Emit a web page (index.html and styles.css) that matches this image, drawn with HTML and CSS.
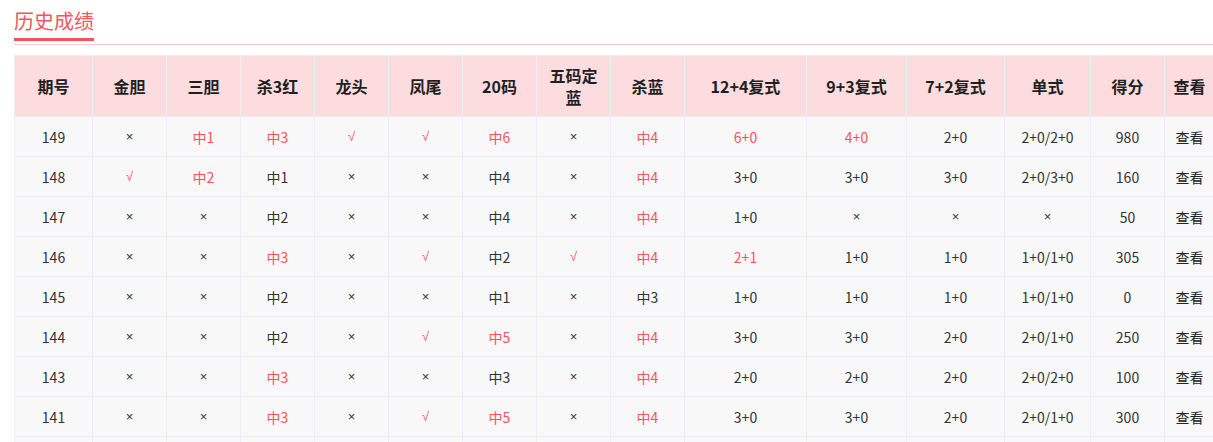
FILE: index.html
```html
<!DOCTYPE html>
<html lang="zh-CN">
<head>
<meta charset="utf-8">
<title>历史成绩</title>
<link rel="stylesheet" href="styles.css">
</head>
<body>
<div class="page">
  <div class="head"><span class="title">历史成绩</span></div>
  <table class="grid">
    <colgroup>
      <col class="c78"><col class="c74"><col class="c74"><col class="c74"><col class="c74"><col class="c74"><col class="c74"><col class="c74"><col class="c74"><col class="c122"><col class="c100"><col class="c98"><col class="c86"><col class="c74"><col class="c50">
    </colgroup>
    <thead>
      <tr><th>期号</th><th>金胆</th><th>三胆</th><th>杀3红</th><th>龙头</th><th>凤尾</th><th>20码</th><th>五码定<br>蓝</th><th>杀蓝</th><th>12+4复式</th><th>9+3复式</th><th>7+2复式</th><th>单式</th><th>得分</th><th>查看</th></tr>
    </thead>
    <tbody>
      <tr><td>149</td><td class="s">×</td><td class="r">中1</td><td class="r">中3</td><td class="r s">√</td><td class="r s">√</td><td class="r">中6</td><td class="s">×</td><td class="r">中4</td><td class="r">6+0</td><td class="r">4+0</td><td>2+0</td><td>2+0/2+0</td><td>980</td><td class="v">查看</td></tr>
      <tr><td>148</td><td class="r s">√</td><td class="r">中2</td><td>中1</td><td class="s">×</td><td class="s">×</td><td>中4</td><td class="s">×</td><td class="r">中4</td><td>3+0</td><td>3+0</td><td>3+0</td><td>2+0/3+0</td><td>160</td><td class="v">查看</td></tr>
      <tr><td>147</td><td class="s">×</td><td class="s">×</td><td>中2</td><td class="s">×</td><td class="s">×</td><td>中4</td><td class="s">×</td><td class="r">中4</td><td>1+0</td><td class="s">×</td><td class="s">×</td><td class="s">×</td><td>50</td><td class="v">查看</td></tr>
      <tr><td>146</td><td class="s">×</td><td class="s">×</td><td class="r">中3</td><td class="s">×</td><td class="r s">√</td><td>中2</td><td class="r s">√</td><td class="r">中4</td><td class="r">2+1</td><td>1+0</td><td>1+0</td><td>1+0/1+0</td><td>305</td><td class="v">查看</td></tr>
      <tr><td>145</td><td class="s">×</td><td class="s">×</td><td>中2</td><td class="s">×</td><td class="s">×</td><td>中1</td><td class="s">×</td><td>中3</td><td>1+0</td><td>1+0</td><td>1+0</td><td>1+0/1+0</td><td>0</td><td class="v">查看</td></tr>
      <tr><td>144</td><td class="s">×</td><td class="s">×</td><td>中2</td><td class="s">×</td><td class="r s">√</td><td class="r">中5</td><td class="s">×</td><td class="r">中4</td><td>3+0</td><td>3+0</td><td>2+0</td><td>2+0/1+0</td><td>250</td><td class="v">查看</td></tr>
      <tr><td>143</td><td class="s">×</td><td class="s">×</td><td class="r">中3</td><td class="s">×</td><td class="s">×</td><td>中3</td><td class="s">×</td><td class="r">中4</td><td>2+0</td><td>2+0</td><td>2+0</td><td>2+0/2+0</td><td>100</td><td class="v">查看</td></tr>
      <tr><td>141</td><td class="s">×</td><td class="s">×</td><td class="r">中3</td><td class="s">×</td><td class="r s">√</td><td class="r">中5</td><td class="s">×</td><td class="r">中4</td><td>3+0</td><td>3+0</td><td>2+0</td><td>2+0/1+0</td><td>300</td><td class="v">查看</td></tr>
      <tr class="more"><td></td><td></td><td></td><td></td><td></td><td></td><td></td><td></td><td></td><td></td><td></td><td></td><td></td><td></td><td></td></tr>
    </tbody>
  </table>
</div>
</body>
</html>
```

FILE: styles.css
```css
html, body {
  margin: 0;
  padding: 0;
  background: #fff;
  overflow: hidden;
}
body {
  font-family: "Noto Sans CJK SC", "Noto Sans", sans-serif;
  color: #333;
}
.page {
  padding: 7px 0 0 14px;
  width: 1200px;
}
.head {
  border-bottom: 1px solid #fcc8cb;
  height: 37px;
  width: 1199px;
}
.title {
  display: inline-block;
  font-size: 20px;
  line-height: 28px;
  height: 31px;
  width: 80px;
  color: #f5535a;
  border-bottom: 3px solid #f5535a;
}
.grid {
  margin-top: 10px;
  table-layout: fixed;
  width: 1200px;
  border-collapse: collapse;
  font-size: 14px;
}
.c78 { width: 78px; }
.c74 { width: 74px; }
.c122 { width: 122px; }
.c100 { width: 100px; }
.c98 { width: 98px; }
.c86 { width: 86px; }
.c50 { width: 50px; }
.grid th {
  background: #fddcdf;
  border: 1px solid #ebeef5;
  height: 60px;
  padding: 0 4px;
  font-size: 16px;
  font-weight: bold;
  line-height: 22px;
  color: #1f1f1f;
  text-align: center;
}
.grid td {
  background: #f8f8f8;
  border: 1px solid #ebeef5;
  height: 39px;
  padding: 0;
  text-align: center;
  color: #333;
}
.grid td.s {
  font-family: "Liberation Sans", sans-serif;
  font-size: 13px;
}
.grid td.r {
  color: #f5535a;
}
.grid td.v {
  font-size: 14px;
  color: #222;
}
```
